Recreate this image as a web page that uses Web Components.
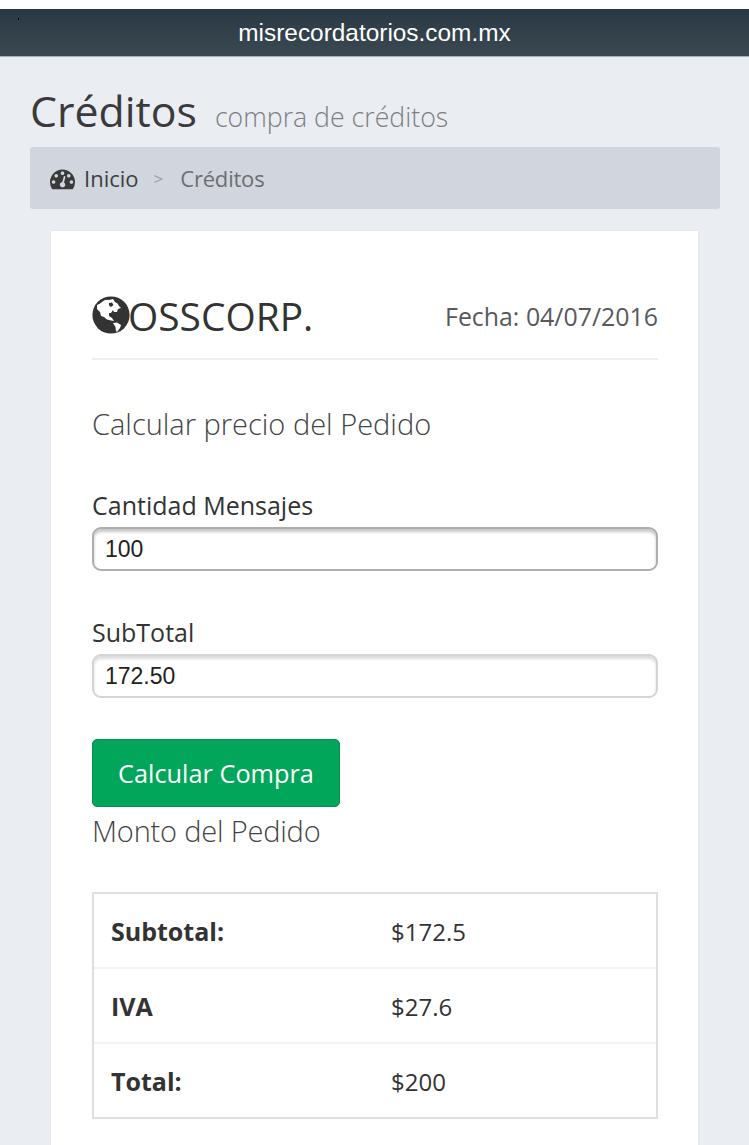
<!DOCTYPE html>
<html lang="es">
<head>
<meta charset="utf-8">
<title>Créditos</title>
<style>
  html, body { margin: 0; padding: 0; }
  body {
    background: #eaedf2;
    font-family: "Open Sans", "Noto Sans", sans-serif;
    color: #333;
    overflow: hidden;
    height: 1145px;
  }
</style>
</head>
<body>
<app-header>misrecordatorios.com.mx</app-header>
<page-title sub="compra de créditos">Créditos</page-title>
<bread-crumb current="Créditos">Inicio</bread-crumb>
<invoice-card>
  <invoice-head date="Fecha: 04/07/2016">OSSCORP.</invoice-head>
  <section-title style="margin-top: 45px">Calcular precio del Pedido</section-title>
  <form-field label="Cantidad Mensajes" value="100" active style="margin-top: 47px"></form-field>
  <form-field label="SubTotal" value="172.50" style="margin-top: 46px"></form-field>
  <green-button style="margin-top: 41px">Calcular Compra</green-button>
  <section-title style="margin-top: 5px; letter-spacing: -0.2px">Monto del Pedido</section-title>
  <totals-table style="margin-top: 42px">
    <totals-row label="Subtotal:" value="$172.5"></totals-row>
    <totals-row label="IVA" value="$27.6"></totals-row>
    <totals-row label="Total:" value="$200"></totals-row>
  </totals-table>
</invoice-card>

<script>
class AppHeader extends HTMLElement {
  constructor() {
    super();
    this.attachShadow({ mode: "open" });
  }
  connectedCallback() {
    this.shadowRoot.innerHTML = `
      <style>
        :host { display: block; padding-top: 9px; background: #fff; }
        .bar {
          height: 47px;
          border-bottom: 1px solid #a9b1b7;
          background: linear-gradient(#293843, #3a4951);
          color: #fff;
          font: 24.4px/48px "Liberation Sans", Arial, sans-serif;
          text-align: center;
          position: relative;
        }
        .dot { position: absolute; left: 18px; top: 9px; width: 1px; height: 2px; background: #000; }
      </style>
      <div class="bar"><span class="dot"></span><slot></slot></div>`;
  }
}

class PageTitle extends HTMLElement {
  constructor() {
    super();
    this.attachShadow({ mode: "open" });
  }
  connectedCallback() {
    this.shadowRoot.innerHTML = `
      <style>
        :host { display: flex; align-items: baseline; gap: 18px; padding: 24px 30px 0; height: 66px; }
        .main { font-size: 42.8px; line-height: 60px; font-weight: 400; color: #3a3a3c; }
        .sub { font-size: 26.7px; font-weight: 300; color: #7d7f82; }
      </style>
      <span class="main"><slot></slot></span>
      <span class="sub">${this.getAttribute("sub")}</span>`;
  }
}

class BreadCrumb extends HTMLElement {
  constructor() {
    super();
    this.attachShadow({ mode: "open" });
  }
  connectedCallback() {
    this.shadowRoot.innerHTML = `
      <style>
        :host {
          display: flex; align-items: center;
          margin: 0 29px 0 30px; height: 62px; padding: 0 20px;
          background: #d1d5de; border-radius: 3px;
          font-size: 22px; color: #3e3e40;
        }
        svg { width: 25px; height: 25px; margin-right: 9px; fill: #3a3a3c; }
        .sep { margin: 0 17px 0 15px; font-size: 17px; color: #9a9ea6; }
        .cur { color: #6c6e72; letter-spacing: -0.2px; }
      </style>
      <svg viewBox="0 0 1792 1792"><path d="M384 1152q0-53-37.500-90.500t-90.500-37.500-90.500 37.500-37.500 90.500 37.500 90.500 90.500 37.500 90.500-37.500 37.500-90.500zm192-448q0-53-37.500-90.500t-90.500-37.500-90.500 37.500-37.500 90.500 37.500 90.500 90.500 37.500 90.500-37.500 37.500-90.500zm428 481l101-382q6-26-7.500-48.500t-38.500-29.500-48 6.500-30 39.500l-101 382q-60 5-107 43.500t-63 98.500q-20 77 20 146t117 89 146-20 89-117q16-60-6-117t-72-91zm660-33q0-53-37.500-90.500t-90.500-37.500-90.500 37.500-37.500 90.500 37.500 90.500 90.500 37.500 90.500-37.500 37.500-90.500zm-640-640q0-53-37.500-90.500t-90.500-37.500-90.500 37.500-37.500 90.500 37.500 90.500 90.500 37.500 90.500-37.500 37.500-90.500zm448 192q0-53-37.500-90.500t-90.500-37.500-90.500 37.500-37.500 90.500 37.500 90.500 90.500 37.500 90.500-37.500 37.500-90.500zm320 448q0 261-141 483-19 29-54 29h-1402q-35 0-54-29-141-221-141-483 0-182 71-348t191-286 286-191 348-71 348 71 286 191 191 286 71 348z"/></svg>
      <slot></slot>
      <span class="sep">&gt;</span>
      <span class="cur">${this.getAttribute("current")}</span>`;
  }
}

class InvoiceCard extends HTMLElement {
  constructor() {
    super();
    this.attachShadow({ mode: "open" });
  }
  connectedCallback() {
    this.shadowRoot.innerHTML = `
      <style>
        :host {
          display: block;
          margin: 22px 51px 0;
          padding: 41px 40px 60px 41px;
          background: #fff;
          box-shadow: 0 0 3px rgba(0,0,0,.06);
        }
      </style>
      <slot></slot>`;
  }
}

class InvoiceHead extends HTMLElement {
  constructor() {
    super();
    this.attachShadow({ mode: "open" });
  }
  connectedCallback() {
    this.shadowRoot.innerHTML = `
      <style>
        :host {
          display: flex; align-items: center; justify-content: space-between;
          height: 88px; border-bottom: 2px solid #eeeeee; box-sizing: border-box;
        }
        .logo { display: flex; align-items: center; font-size: 38.9px; color: #333; }
        svg { width: 38px; height: 38px; flex: none; margin-right: -2px; }
        .date { font-size: 24.9px; color: #58595b; padding-top: 2px; }
      </style>
      <div class="logo">
        <svg viewBox="0 0 38 38">
          <circle cx="19" cy="19" r="18.600" fill="#333"/>
          <path fill="#fff" fill-rule="evenodd" d="M5 9 Q8 8 10 6 Q13 3 17 4 L21 3 L23 6 Q26 7 27 10 L29 12 L26 13 L25 16 L22 16 L21 14 L19 17 L17 17 L17 20 L20 22 L22 25 L19 24.500 L15 23.500 L12 21 L9 20 L8 16 L5 13 Z M17 7 L20 6.500 L21.500 9 L19 11 L17 9.500 Z"/>
          <path fill="#fff" d="M21 27 L25 26.500 L29 29 L28 32 L25.500 35.500 L24 35.500 L23.500 31 Z"/>
        </svg>
        <span><slot></slot></span>
      </div>
      <span class="date">${this.getAttribute("date")}</span>`;
  }
}

class SectionTitle extends HTMLElement {
  constructor() {
    super();
    this.attachShadow({ mode: "open" });
  }
  connectedCallback() {
    this.shadowRoot.innerHTML = `
      <style>
        :host { display: block; font-size: 29px; line-height: 38px; font-weight: 300; color: #444; }
      </style>
      <slot></slot>`;
  }
}

class FormField extends HTMLElement {
  constructor() {
    super();
    this.attachShadow({ mode: "open" });
  }
  connectedCallback() {
    const active = this.hasAttribute("active");
    this.shadowRoot.innerHTML = `
      <style>
        :host { display: block; }
        label { display: block; font-size: 25px; line-height: 30px; color: #333; margin-bottom: 7px; }
        .box {
          height: 44px; box-sizing: border-box; padding: 0 11px;
          border: 2px solid ${active ? "#aeaeae" : "#d4d4d4"};
          border-radius: 9px;
          box-shadow: inset 0 3px 3px ${active ? "rgba(0,0,0,.22)" : "rgba(0,0,0,.14)"};
          background: #fff;
          font: 23px/40px "Liberation Sans", Arial, sans-serif;
          color: #222;
        }
      </style>
      <label>${this.getAttribute("label")}</label>
      <div class="box" role="textbox">${this.getAttribute("value")}</div>`;
  }
}

class GreenButton extends HTMLElement {
  constructor() {
    super();
    this.attachShadow({ mode: "open" });
  }
  connectedCallback() {
    this.shadowRoot.innerHTML = `
      <style>
        :host {
          display: flex; align-items: center; justify-content: center;
          width: 248px; height: 68px; box-sizing: border-box;
          background: #02a65a; border: 1px solid #068f50; border-radius: 5px;
          color: #fff; font-size: 25.3px;
        }
      </style>
      <slot></slot>`;
  }
}

class TotalsTable extends HTMLElement {
  constructor() {
    super();
    this.attachShadow({ mode: "open" });
  }
  connectedCallback() {
    this.shadowRoot.innerHTML = `
      <style>
        :host { display: block; border: 2px solid #dddfe0; }
      </style>
      <slot></slot>`;
  }
}

class TotalsRow extends HTMLElement {
  constructor() {
    super();
    this.attachShadow({ mode: "open" });
  }
  connectedCallback() {
    this.shadowRoot.innerHTML = `
      <style>
        :host {
          display: grid; grid-template-columns: 280px 1fr; align-items: center;
          height: 75px; padding-left: 17px; box-sizing: border-box;
          border-bottom: 2px solid #f3f3f3; font-size: 24px; color: #333;
        }
        :host(:last-child) { border-bottom: none; height: 73px; }
        b { font-weight: 700; font-size: 25px; }
        span { padding-top: 2px; }
      </style>
      <b>${this.getAttribute("label")}</b>
      <span>${this.getAttribute("value")}</span>`;
  }
}

customElements.define("app-header", AppHeader);
customElements.define("page-title", PageTitle);
customElements.define("bread-crumb", BreadCrumb);
customElements.define("invoice-card", InvoiceCard);
customElements.define("invoice-head", InvoiceHead);
customElements.define("section-title", SectionTitle);
customElements.define("form-field", FormField);
customElements.define("green-button", GreenButton);
customElements.define("totals-table", TotalsTable);
customElements.define("totals-row", TotalsRow);
</script>
</body>
</html>
